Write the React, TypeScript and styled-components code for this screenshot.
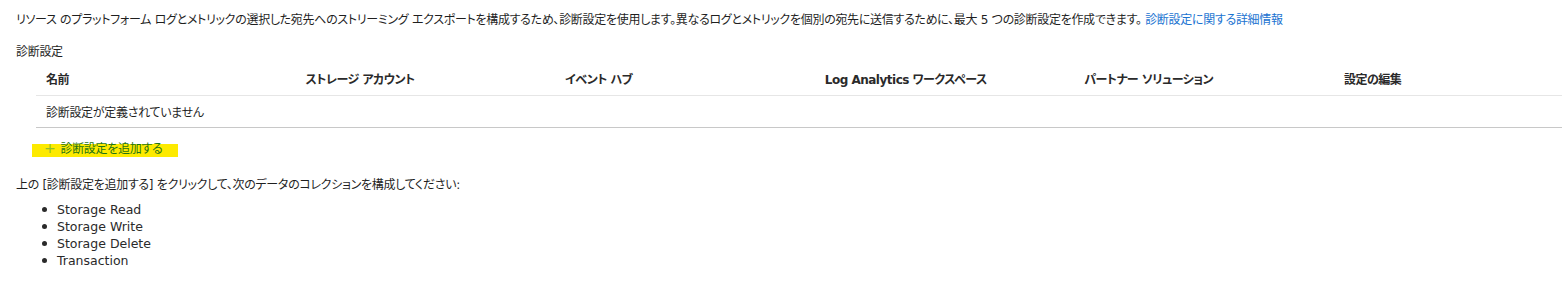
import React from 'react';
import styled, { createGlobalStyle } from 'styled-components';

const GlobalStyle = createGlobalStyle`
  body {
    margin: 0;
    background: #ffffff;
    font-family: "DejaVu Sans", "Noto Sans CJK JP", sans-serif;
    font-size: 12px;
    letter-spacing: -0.3px;
    color: #1f1f1f;
    font-feature-settings: "palt";
  }
`;

const columns = [
  '名前',
  'ストレージ アカウント',
  'イベント ハブ',
  'Log Analytics ワークスペース',
  'パートナー ソリューション',
  '設定の編集',
];

const categories = ['Storage Read', 'Storage Write', 'Storage Delete', 'Transaction'];

const App: React.FC = () => {
  return (
    <Page>
      <GlobalStyle />
      <Intro>
        リソース のプラットフォーム ログとメトリックの選択した宛先へのストリーミング
        エクスポートを構成するため、診断設定を使用します。異なるログとメトリックを個別の宛先に送信するために、最大
        5 つの診断設定を作成できます。 <Link href="#">診断設定に関する詳細情報</Link>
      </Intro>
      <SectionLabel>診断設定</SectionLabel>
      <Table>
        <HeaderRow>
          {columns.map((c) => (
            <HeaderCell key={c}>{c}</HeaderCell>
          ))}
        </HeaderRow>
        <BodyRow>
          <Cell>診断設定が定義されていません</Cell>
        </BodyRow>
      </Table>
      <AddButton>
        <Plus>+</Plus>
        診断設定を追加する
      </AddButton>
      <Instruction>上の [診断設定を追加する] をクリックして、次のデータのコレクションを構成してください:</Instruction>
      <List>
        {categories.map((c) => (
          <Item key={c}>{c}</Item>
        ))}
      </List>
    </Page>
  );
};
export default App;

const Page = styled.div`
  padding: 11px 0 0 16px;
  height: 285px;
  overflow: hidden;
`;
const Intro = styled.p`
  margin: 0;
  line-height: 18px;
  white-space: nowrap;
`;
const Link = styled.a`
  color: #1a73d1;
  text-decoration: none;
`;
const SectionLabel = styled.div`
  margin-top: 14px;
  line-height: 18px;
`;
const Table = styled.div`
  margin-left: 20px;
`;
const HeaderRow = styled.div`
  display: grid;
  grid-template-columns: repeat(5, 259.6px) 1fr;
  height: 34px;
  align-items: center;
  border-bottom: 1px solid #e6e6e6;
`;
const HeaderCell = styled.div`
  padding-left: 10px;
  font-weight: 600;
  white-space: nowrap;
  color: #2a2a2a;
  letter-spacing: -0.5px;
`;
const BodyRow = styled.div`
  display: flex;
  align-items: center;
  height: 31px;
  border-bottom: 1px solid #c8c8c8;
`;
const Cell = styled.div`
  padding-left: 10px;
`;
const AddButton = styled.div`
  display: inline-flex;
  align-items: center;
  gap: 5px;
  margin: 10px 0 0 16px;
  padding: 0 16px 0 12px;
  height: 19px;
  color: #1f7414;
  background: linear-gradient(to bottom, transparent 0, transparent 6px, #fdea00 6px, #fdea00 100%);
`;
const Plus = styled.span`
  color: #8fbf2a;
  font-size: 14px;
  line-height: 1;
`;
const Instruction = styled.div`
  margin-top: 19px;
  line-height: 18px;
`;
const List = styled.ul`
  margin: 7px 0 0;
  padding-left: 41px;
  list-style: none;
  font-size: 12.5px;
  letter-spacing: 0;
  line-height: 17px;
  color: #2a2a2a;
`;
const Item = styled.li`
  position: relative;
  &::before {
    content: '';
    position: absolute;
    left: -15px;
    top: 6px;
    width: 5px;
    height: 5px;
    border-radius: 50%;
    background: #2a2a2a;
  }
`;
